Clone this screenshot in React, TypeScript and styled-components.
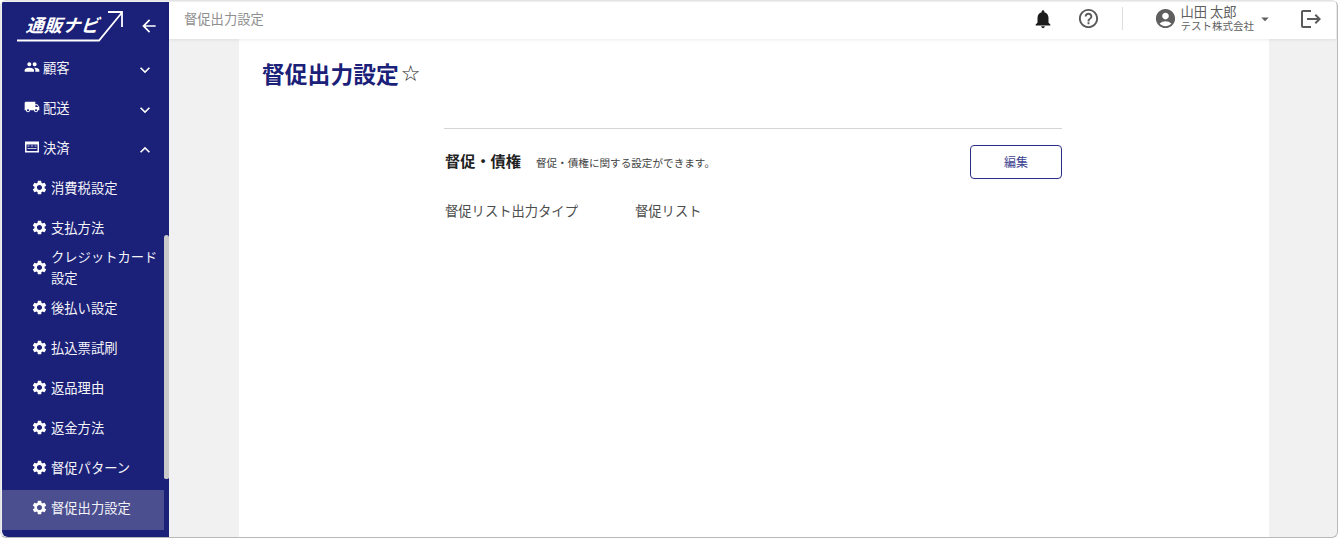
import React from 'react'
import styled, { createGlobalStyle } from 'styled-components'
import {
  MdAccountCircle,
  MdArrowBack,
  MdArrowDropDown,
  MdExpandLess,
  MdExpandMore,
  MdHelpOutline,
  MdLocalShipping,
  MdLogout,
  MdNotifications,
  MdPeople,
  MdSettings,
} from 'react-icons/md'

const navy = '#1b2078'

const GlobalStyle = createGlobalStyle`
  html, body {
    margin: 0;
    padding: 0;
    background: #fff;
  }
  * {
    box-sizing: border-box;
  }
  body {
    font-family: "Noto Sans CJK JP", "Noto Sans", "Liberation Sans", sans-serif;
  }
`

const Frame = styled.div`
  width: 1338px;
  height: 538px;
  display: flex;
  overflow: hidden;
  background: #f1f1f1;
  border: 1px solid #b9b9b9;
  border-top-color: #e4e4e4;
  border-left-color: #e4e4e4;
  border-radius: 6px;
  padding: 1px 1px 0 1px;
`

const Sidebar = styled.aside`
  position: relative;
  width: 167px;
  flex-shrink: 0;
  background: ${navy};
  color: #fff;
  display: flex;
  flex-direction: column;
  border-bottom-left-radius: 6px;
  overflow: hidden;
`

const LogoRow = styled.div`
  height: 48px;
  display: flex;
  align-items: center;
  justify-content: space-between;
  padding: 0 10px 0 15px;
  flex-shrink: 0;
`

const Logo = styled.div`
  position: relative;
  width: 107px;
  height: 34px;
  margin-top: 1px;
`

const LogoText = styled.span`
  position: absolute;
  left: 11px;
  top: 4px;
  font-size: 18px;
  line-height: 20px;
  font-weight: 700;
  letter-spacing: 0.3px;
  white-space: nowrap;
  transform: skewX(-18deg);
`

const LogoLine = styled.svg`
  position: absolute;
  left: 0;
  top: 0;
`

const BackButton = styled.span`
  display: flex;
  font-size: 20px;
`

const Nav = styled.nav`
  display: flex;
  flex-direction: column;
  width: 162px;
`

const NavItem = styled.div<{ $child?: boolean; $active?: boolean }>`
  height: 40px;
  display: flex;
  align-items: center;
  flex-shrink: 0;
  padding-left: ${props => (props.$child ? '29px' : '22px')};
  padding-right: 4px;
  background: ${props => (props.$active ? '#4b4e8f' : 'transparent')};
`

const NavIcon = styled.span<{ $child?: boolean }>`
  display: flex;
  width: ${props => (props.$child ? '20px' : '19px')};
  font-size: ${props => (props.$child ? '17px' : '16px')};
  margin-bottom: 6px;
  flex-shrink: 0;
`

const NavLabel = styled.span`
  flex: 1;
  font-size: 13.3px;
  line-height: 21px;
  margin-bottom: 6px;
  color: #f3f3f8;
`

const Chevron = styled.span`
  display: flex;
  font-size: 20px;
  margin-right: 5px;
`

const ScrollThumb = styled.div`
  position: absolute;
  right: 0;
  top: 233px;
  width: 5px;
  height: 244px;
  background: #c9c9c9;
  border-radius: 3px 3px 2px 2px;
`

const Main = styled.div`
  flex: 1;
  min-width: 0;
  display: flex;
  flex-direction: column;
`

const TopBar = styled.header`
  position: relative;
  height: 37px;
  flex-shrink: 0;
  background: #fff;
  display: flex;
  align-items: center;
  padding: 0 13px 4px 15px;
  box-shadow: 0 1px 3px rgba(0, 0, 0, 0.08);
`

const Crumb = styled.span`
  flex: 1;
  font-size: 13.3px;
  color: #8f8f8f;
`

const TopIcon = styled.span<{ $size: number; $color: string; $gap?: number }>`
  display: flex;
  font-size: ${props => props.$size}px;
  color: ${props => props.$color};
  margin-right: ${props => props.$gap ?? 0}px;
`

const TopDivider = styled.span`
  width: 1px;
  height: 23px;
  background: #dedede;
  margin: 0 31px 0 22px;
`

const UserBlock = styled.div`
  display: flex;
  align-items: center;
  margin-right: 25px;
`

const UserText = styled.div`
  display: flex;
  flex-direction: column;
  margin: 0 2px 0 4px;
  color: #5f5f5f;
`

const UserName = styled.span`
  font-size: 13.3px;
  line-height: 14px;
`

const UserCompany = styled.span`
  font-size: 10.5px;
  line-height: 13px;
`

const Content = styled.div`
  flex: 1;
  min-height: 0;
  display: flex;
  justify-content: center;
  padding-left: 3px;
`

const Sheet = styled.main`
  width: 1030px;
  background: #fff;
  padding: 18px 23px 0;
`

const PageTitle = styled.h1`
  margin: 0;
  font-size: 22.8px;
  line-height: 34px;
  font-weight: 700;
  color: ${navy};
  display: flex;
  align-items: center;
`

const Star = styled.span`
  font-size: 22px;
  font-weight: 400;
  color: #222;
  margin-left: 2px;
  line-height: 34px;
  font-family: "DejaVu Sans", sans-serif;
`

const Panel = styled.section`
  width: 618px;
  margin: 37px 0 0 182px;
  border-top: 1px solid #d4d4d4;
`

const PanelHeader = styled.div`
  display: flex;
  align-items: center;
  margin-top: 16px;
  height: 34px;
  padding-left: 1px;
`

const PanelTitle = styled.h2`
  margin: 0 0 4px;
  font-size: 15.2px;
  line-height: 22px;
  font-weight: 700;
  color: #222;
`

const PanelNote = styled.span`
  flex: 1;
  margin-left: 15px;
  font-size: 10.6px;
  color: #444;
`

const EditButton = styled.button`
  width: 92px;
  height: 34px;
  font: inherit;
  font-size: 12px;
  color: #3b3f90;
  background: #fff;
  border: 1px solid #2a2f85;
  border-radius: 4px;
  padding: 0 0 2px;
`

const SettingRow = styled.div`
  display: grid;
  grid-template-columns: 190px 1fr;
  margin-top: 12px;
  padding-left: 1px;
  font-size: 13.3px;
  line-height: 40px;
  height: 40px;
  color: #4d4d4d;
`

const children = ['消費税設定', '支払方法', 'クレジットカード設定', '後払い設定', '払込票試刷', '返品理由', '返金方法', '督促パターン', '督促出力設定']

const PaymentIcon = () => (
  <svg width="1em" height="1em" viewBox="0 0 16 16" fill="none">
    <rect x="1" y="2.5" width="14" height="11" fill="#fff" />
    <rect x="2.5" y="5.5" width="11" height="6.5" fill={navy} />
    <path d="M3.5 7H5.5M7 7H9M10.5 7H12.5M3.5 9.5H12.5" stroke="#c9cae0" strokeWidth="1.2" />
  </svg>
)

const App: React.FC = () => {
  return (
    <>
      <GlobalStyle />
      <Frame>
        <Sidebar>
          <LogoRow>
            <Logo>
              <LogoText>通販ナビ</LogoText>
              <LogoLine width="107" height="34" viewBox="0 0 107 34" fill="none" stroke="#fff" strokeWidth="1.8">
                <path d="M0 30.5 H82 L105 2.5" />
                <path d="M91 2 H105 V17" />
              </LogoLine>
            </Logo>
            <BackButton>
              <MdArrowBack />
            </BackButton>
          </LogoRow>
          <Nav>
            <NavItem>
              <NavIcon><MdPeople /></NavIcon>
              <NavLabel>顧客</NavLabel>
              <Chevron><MdExpandMore /></Chevron>
            </NavItem>
            <NavItem>
              <NavIcon><MdLocalShipping /></NavIcon>
              <NavLabel>配送</NavLabel>
              <Chevron><MdExpandMore /></Chevron>
            </NavItem>
            <NavItem>
              <NavIcon><PaymentIcon /></NavIcon>
              <NavLabel>決済</NavLabel>
              <Chevron><MdExpandLess /></Chevron>
            </NavItem>
            {children.map((label, i) => (
              <NavItem key={label} $child $active={i === children.length - 1}>
                <NavIcon $child><MdSettings /></NavIcon>
                <NavLabel>{label}</NavLabel>
              </NavItem>
            ))}
          </Nav>
          <ScrollThumb />
        </Sidebar>
        <Main>
          <TopBar>
            <Crumb>督促出力設定</Crumb>
            <TopIcon $size={22} $color="#1c1c1c" $gap={23}><MdNotifications /></TopIcon>
            <TopIcon $size={23} $color="#5a5a5a"><MdHelpOutline /></TopIcon>
            <TopDivider />
            <UserBlock>
              <TopIcon $size={23} $color="#5f5f5f"><MdAccountCircle /></TopIcon>
              <UserText>
                <UserName>山田 太郎</UserName>
                <UserCompany>テスト株式会社</UserCompany>
              </UserText>
              <TopIcon $size={18} $color="#5f5f5f"><MdArrowDropDown /></TopIcon>
            </UserBlock>
            <TopIcon $size={24} $color="#5a5a5a"><MdLogout /></TopIcon>
          </TopBar>
          <Content>
            <Sheet>
              <PageTitle>督促出力設定<Star>☆</Star></PageTitle>
              <Panel>
                <PanelHeader>
                  <PanelTitle>督促・債権</PanelTitle>
                  <PanelNote>督促・債権に関する設定ができます。</PanelNote>
                  <EditButton>編集</EditButton>
                </PanelHeader>
                <SettingRow>
                  <span>督促リスト出力タイプ</span>
                  <span>督促リスト</span>
                </SettingRow>
              </Panel>
            </Sheet>
          </Content>
        </Main>
      </Frame>
    </>
  )
}

export default App
